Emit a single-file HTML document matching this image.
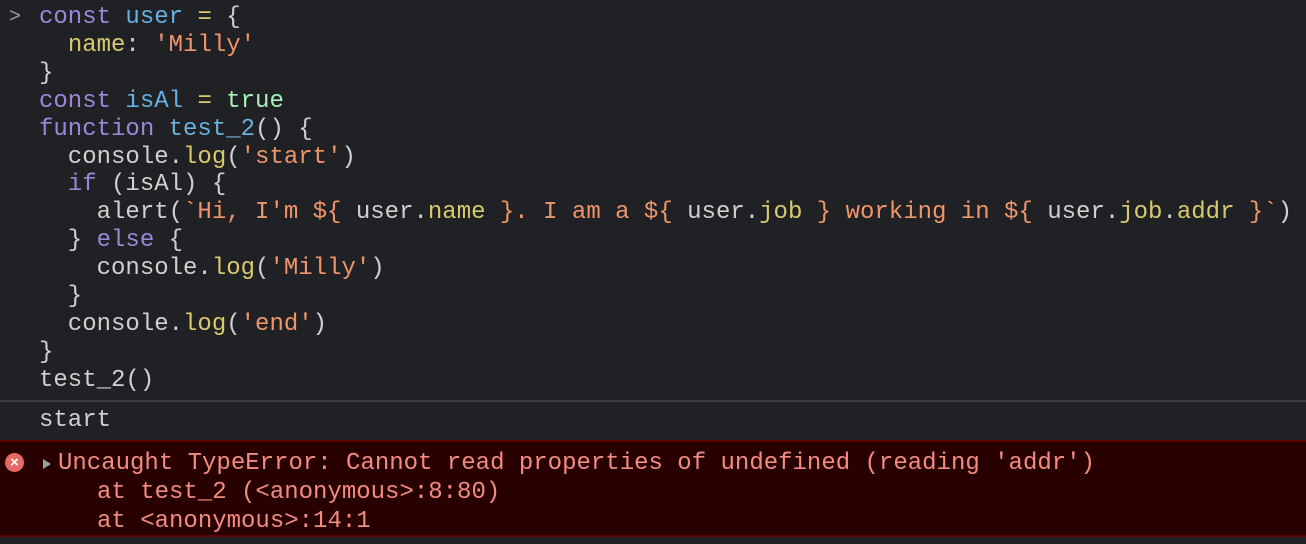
<!DOCTYPE html>
<html><head><style>
body{margin:0;width:1306px;height:544px;background:#202124;overflow:hidden;font-family:"Liberation Mono",monospace;font-size:24px;color:#d0d0d0;position:relative}
.code{position:absolute;left:39px;top:4px;line-height:27.9px;white-space:pre}
.k{color:#9d86d8}.v{color:#66b0e3}.p{color:#d9c96e}.s{color:#f0956a}.t{color:#a6f2b8}.f{color:#6ab0e0}
.pr{position:absolute;left:9px;top:4px;line-height:27.9px;color:#9aa0a6;font-size:20px}
.sep{position:absolute;left:0;right:0;top:400px;height:2px;background:#3c3d40}
.start{position:absolute;left:39px;top:407px;line-height:28px;white-space:pre}
.err{position:absolute;left:0;right:0;top:440px;height:97px;background:#290000;border-top:2px solid #5c0000;border-bottom:2px solid #5c0000;box-sizing:border-box}
.et{position:absolute;top:7px;line-height:29px;white-space:pre;color:#f28b82}
.ic{position:absolute;left:5px;top:11px;width:19px;height:19px;border-radius:50%;background:#e46962;color:#fff;font:bold 15px/19px "Liberation Sans",sans-serif;text-align:center}
.tri{position:absolute;left:43px;top:17px;width:0;height:0;border-left:8px solid #9aa0a6;border-top:5px solid transparent;border-bottom:5px solid transparent}
</style></head><body>
<div class="pr">&gt;</div>
<div class="code"><span class="k">const</span> <span class="v">user</span> <span class="p">=</span> {
  <span class="p">name</span>: <span class="s">'Milly'</span>
}
<span class="k">const</span> <span class="v">isAl</span> <span class="p">=</span> <span class="t">true</span>
<span class="k">function</span> <span class="f">test_2</span>() {
  console.<span class="p">log</span>(<span class="s">'start'</span>)
  <span class="k">if</span> (isAl) {
    alert(<span class="s">`Hi, I'm ${</span> user.<span class="p">name</span> <span class="s">}. I am a ${</span> user.<span class="p">job</span> <span class="s">} working in ${</span> user.<span class="p">job</span>.<span class="p">addr</span> <span class="s">}`</span>)
  } <span class="k">else</span> {
    console.<span class="p">log</span>(<span class="s">'Milly'</span>)
  }
  console.<span class="p">log</span>(<span class="s">'end'</span>)
}
test_2()</div>
<div class="sep"></div>
<div class="start">start</div>
<div class="err"><div class="ic">×</div><div class="tri"></div><div class="et" style="left:58px">Uncaught TypeError: Cannot read properties of undefined (reading 'addr')</div><div class="et" style="left:97px;top:36px">at test_2 (&lt;anonymous&gt;:8:80)
at &lt;anonymous&gt;:14:1</div></div>
</body></html>
